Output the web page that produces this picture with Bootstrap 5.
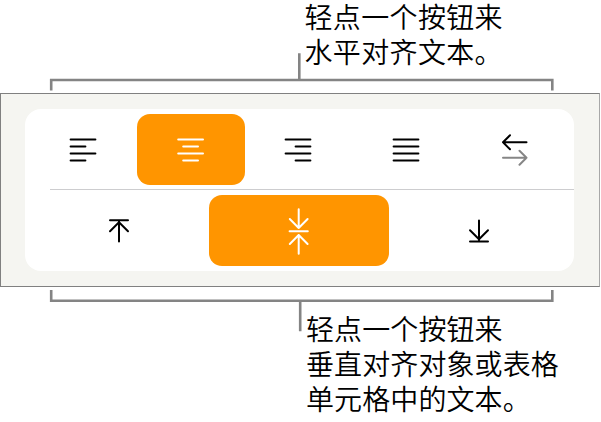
<!DOCTYPE html>
<html lang="zh-CN">
<head>
    <meta charset="UTF-8">
    <meta name="viewport" content="width=device-width, initial-scale=1.0">
    <title>对齐文本</title>

    <link href="https://cdn.jsdelivr.net/npm/bootstrap@5.3.0/dist/css/bootstrap.min.css" rel="stylesheet">
    <script src="https://cdn.jsdelivr.net/npm/bootstrap@5.3.0/dist/js/bootstrap.bundle.min.js"></script>
    <style>
        body {
            width: 601px;
            height: 422px;
            font-family: "Noto Sans CJK SC", sans-serif;
            color: #000;
        }
        svg {
            display: block;
            fill: none;
            stroke: currentColor;
            stroke-width: 2;
            stroke-linecap: round;
            stroke-linejoin: round;
        }
        .callout-top { height: 93px; }
        .callout-bottom { height: 135px; padding-top: 3px; }
        .caption {
            font-size: 28px;
            font-weight: 350;
            line-height: 34.7px;
            white-space: nowrap;
        }
        .callout-top .caption { height: 80px; margin-top: -1px; padding-left: 304.5px; letter-spacing: .35px; }
        .callout-bottom .caption { padding-left: 306px; padding-top: 20.4px; letter-spacing: .1px; }
        .bracket {
            stroke: #848484;
            stroke-width: 2.6;
            stroke-linecap: butt;
            stroke-linejoin: miter;
        }
        .stem-top { margin-top: -26px; }
        .stem-bottom { margin-bottom: -41px; }
        .panel {
            width: 600px;
            height: 194px;
            background: #f5f5f1;
            border: 1px solid #808080;
            border-right-color: #a8a8a8;
            padding: 15px 25px 15px 24px;
        }
        .controls { height: 162px; border-radius: 16px; overflow: hidden; }
        .line-h { height: 80px; padding: 5px 6px 0 4px; }
        .line-v { height: 81px; padding: 5px 5px 0 4px; }
        .rule { height: 1px; margin-left: 25.4px; background: #cdcdcf; }
        .seg {
            height: 71px;
            padding: 0;
            border: 0;
            border-radius: 13px;
            color: #000;
            background: none;
            flex: 1 1 0;
        }
        .seg.active, .seg.active:hover { background: #ff9500; color: #fff; }
        .faded { stroke: #868686; }
    </style>
</head>
<body class="bg-white overflow-hidden">

    <div class="callout-top overflow-hidden">
        <div class="caption">
            <div>轻点一个按钮来</div>
            <div>水平对齐文本。</div>
        </div>
        <svg class="stem-top" width="601" height="40" viewBox="0 53 601 40">
            <path class="bracket" d="M51.2 90.5V80H552.3V90.5M299.3 53.3V80"/>
        </svg>
    </div>

    <div class="panel">
        <div class="controls bg-white">
            <div class="line-h d-flex">
                <button type="button" class="btn seg d-flex align-items-center justify-content-center" aria-label="左对齐">
                    <svg width="28" height="26" viewBox="0 0 28 26"><path d="M1.6 2.6H26.4M1.6 9.6H16.4M1.6 16.6H26.4M1.6 23.6H16.4"/></svg>
                </button>
                <button type="button" class="btn seg active d-flex align-items-center justify-content-center" aria-label="居中对齐">
                    <svg width="28" height="26" viewBox="0 0 28 26"><path d="M1.2 2.6H26M6.2 9.6H21M1.2 16.6H26M6.2 23.6H21"/></svg>
                </button>
                <button type="button" class="btn seg d-flex align-items-center justify-content-center" aria-label="右对齐">
                    <svg width="28" height="26" viewBox="0 0 28 26"><path d="M1.6 2.6H26.4M11.6 9.6H26.4M1.6 16.6H26.4M11.6 23.6H26.4"/></svg>
                </button>
                <button type="button" class="btn seg d-flex align-items-center justify-content-center" aria-label="两端对齐">
                    <svg width="28" height="26" viewBox="0 0 28 26"><path d="M1.6 2.6H26.4M1.6 9.6H26.4M1.6 16.6H26.4M1.6 23.6H26.4"/></svg>
                </button>
                <button type="button" class="btn seg d-flex align-items-center justify-content-center" aria-label="文本方向">
                    <svg width="28" height="34" viewBox="0 0 28 34">
                        <path d="M26.5 9.3H3M10 2.3L3 9.3L10 16.3"/>
                        <path class="faded" d="M3 24.7H26.5M19.5 17.7L26.5 24.7L19.5 31.7"/>
                    </svg>
                </button>
            </div>
            <div class="rule"></div>
            <div class="line-v d-flex">
                <button type="button" class="btn seg d-flex align-items-center justify-content-center" aria-label="顶部对齐">
                    <svg width="22" height="26" viewBox="0 0 22 26"><path d="M2 2.2H20M11 3.5V23.5M2 13.2L11 4.2L20 13.2"/></svg>
                </button>
                <button type="button" class="btn seg active d-flex align-items-center justify-content-center" aria-label="垂直居中">
                    <svg width="22" height="48" viewBox="0 0 22 48"><path d="M1.6 24.3H19.8M10.7 2.2V21M1.8 12L10.7 21L19.6 12M10.7 46.8V28M1.8 37L10.7 28L19.6 37"/></svg>
                </button>
                <button type="button" class="btn seg d-flex align-items-center justify-content-center" aria-label="底部对齐">
                    <svg width="22" height="26" viewBox="0 0 22 26"><path d="M2 23.5H20M11 2.5V22M2 12.2L11 21.3L20 12.2"/></svg>
                </button>
            </div>
        </div>
    </div>

    <div class="callout-bottom">
        <svg class="stem-bottom" width="601" height="42" viewBox="0 290 601 42">
            <path class="bracket" d="M51.2 290V300.8H552.3V290M300.2 300.8V331.3"/>
        </svg>
        <div class="caption">
            <div>轻点一个按钮来</div>
            <div>垂直对齐对象或表格</div>
            <div>单元格中的文本。</div>
        </div>
    </div>

</body>
</html>
